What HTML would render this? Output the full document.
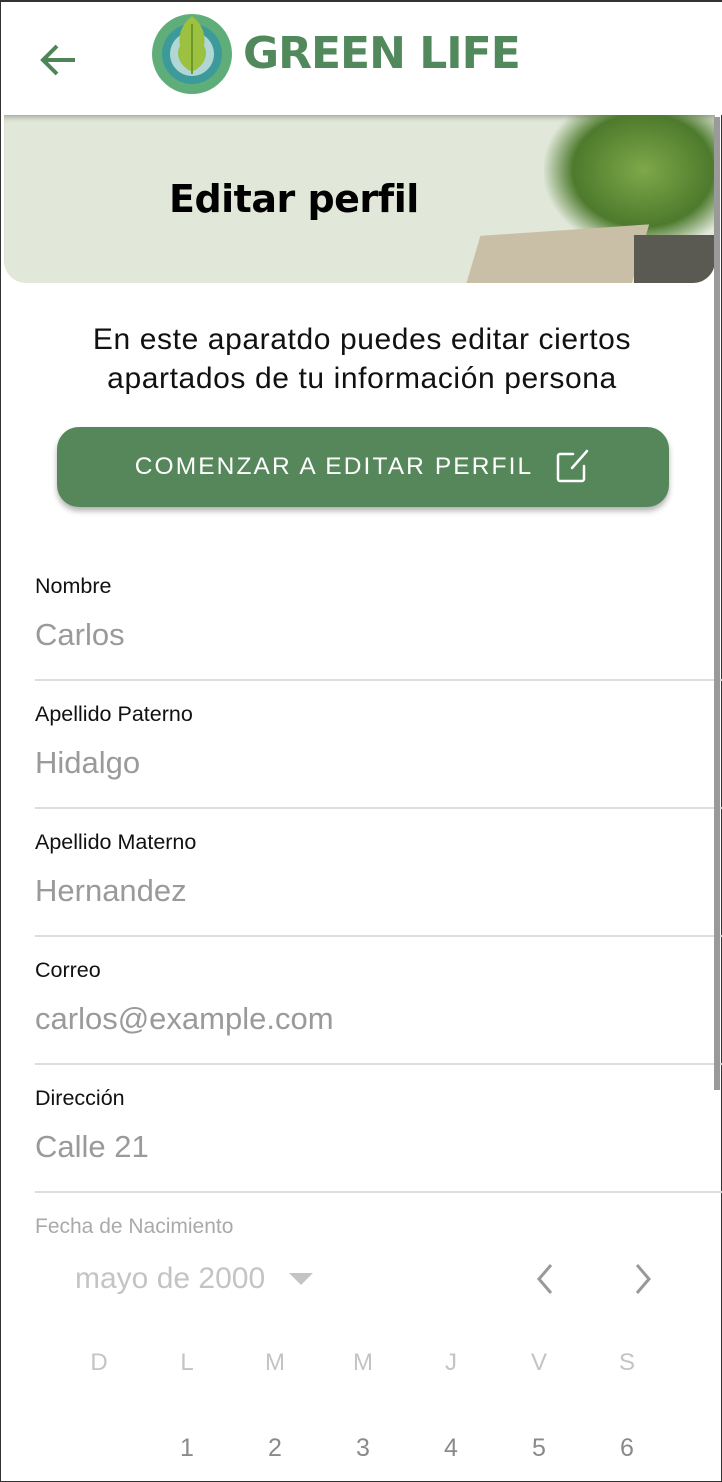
<!DOCTYPE html>
<html><head><meta charset="utf-8">
<style>
*{margin:0;padding:0;box-sizing:border-box}
body{width:722px;height:1482px;overflow:hidden;background:#fff;font-family:"Liberation Sans",sans-serif;position:relative;border:1px solid #333;border-top:2px solid #333}
.hdr{position:absolute;left:0;top:0;width:722px;height:113px;background:#fff}
.banner{position:absolute;left:3px;top:113px;width:711px;height:168px;background:#e1e8da;border-radius:0 0 22px 22px;overflow:hidden;box-shadow:inset 0 6px 6px -4px rgba(0,0,0,.3)}
.title{position:absolute;left:168px;top:175px;font:bold 38px "DejaVu Sans",sans-serif;color:#000;letter-spacing:-0.5px}
.intro{position:absolute;left:0;width:722px;top:318px;text-align:center;font-size:30px;line-height:39px;color:#111;letter-spacing:0.6px}
.btn{position:absolute;left:56px;top:425px;width:612px;height:80px;background:#56875b;border-radius:22px;box-shadow:0 4px 6px rgba(0,0,0,.3);color:#fff;font-size:24.5px;letter-spacing:2.1px;display:flex;align-items:center;justify-content:center}
.f{position:absolute;left:34px;width:688px;border-bottom:2px solid #ddd;height:128px}
.f .l{position:absolute;top:21px;font-size:21.5px;color:#111}
.f .v{position:absolute;top:64px;font-size:31px;color:#9a9a9a}
.sb{position:absolute;left:713px;top:115px;width:6px;height:973px;background:#9a9a9a}
.g{position:absolute;color:#c4c4c4;font-size:24px;width:40px;text-align:center}
.n{position:absolute;color:#8a8a8a;font-size:25px;width:40px;text-align:center;top:1432px}
</style></head><body>
<div class="hdr">
<svg style="position:absolute;left:38px;top:40px" width="40" height="36" viewBox="0 0 40 36"><path d="M36 18H4M18 4L4 18l14 14" fill="none" stroke="#4d8558" stroke-width="4"/></svg>
<svg style="position:absolute;left:146px;top:8px" width="90" height="88" viewBox="0 0 90 88">
<g fill="#5fae7a"><circle cx="45" cy="44" r="40"/></g>
<g fill="#3c9a9a"><circle cx="45" cy="44" r="30"/></g>
<g fill="#fff" opacity=".6"><circle cx="45" cy="44" r="22"/></g>
<path d="M45 6c10 8 14 18 12 30 4 6 2 16-6 22-4 4-8 4-12 0-8-6-10-16-6-22-2-12 2-22 12-30z" fill="#9cc040"/>
<path d="M45 14v50" stroke="#6f9a2b" stroke-width="2"/>
</svg>
<div style="position:absolute;left:242px;top:26px;font:bold 44px 'DejaVu Sans',sans-serif;color:#52895c;letter-spacing:-1px">GREEN LIFE</div>
</div>
<div class="banner">
<div style="position:absolute;left:540px;top:-10px;width:180px;height:145px;background:radial-gradient(ellipse at 55% 45%,#7fa84a 0%,#4d7a2c 50%,rgba(77,122,44,0) 72%)"></div>
<div style="position:absolute;left:468px;top:115px;width:165px;height:70px;background:#c9bfa6;transform:skewX(-20deg) rotate(-4deg)"></div>
<div style="position:absolute;left:630px;top:120px;width:85px;height:50px;background:#5a5a52"></div>
</div>
<div class="title">Editar perfil</div>
<div class="intro">En este aparatdo puedes editar ciertos<br>apartados de tu información persona</div>
<div class="btn">COMENZAR A EDITAR PERFIL
<svg style="margin-left:20px" width="38" height="38" viewBox="0 0 38 38"><path d="M20 6H7a2 2 0 0 0-2 2v23a2 2 0 0 0 2 2h22a2 2 0 0 0 2-2V18" fill="none" stroke="#fff" stroke-width="2.5" stroke-linecap="round"/><path d="M34 3L19 20" stroke="#fff" stroke-width="2.5" stroke-linecap="round"/></svg></div>
<div class="f" style="top:551px"><div class="l">Nombre</div><div class="v">Carlos</div></div>
<div class="f" style="top:679px"><div class="l">Apellido Paterno</div><div class="v">Hidalgo</div></div>
<div class="f" style="top:807px"><div class="l">Apellido Materno</div><div class="v">Hernandez</div></div>
<div class="f" style="top:935px"><div class="l">Correo</div><div class="v">carlos@example.com</div></div>
<div class="f" style="top:1063px"><div class="l">Dirección</div><div class="v">Calle 21</div></div>
<div class="sb"></div>
<div style="position:absolute;left:34px;top:1213px;font-size:21px;color:#aaa">Fecha de Nacimiento</div>
<div style="position:absolute;left:74px;top:1260px;font-size:30px;color:#c4c4c4">mayo de 2000</div>
<div style="position:absolute;left:288px;top:1271px;width:0;height:0;border-left:12px solid transparent;border-right:12px solid transparent;border-top:12px solid #c4c4c4"></div>
<svg style="position:absolute;left:534px;top:1260px" width="20" height="34"><path d="M16 3L4 17l12 14" fill="none" stroke="#999" stroke-width="3"/></svg>
<svg style="position:absolute;left:632px;top:1260px" width="20" height="34"><path d="M4 3l12 14L4 31" fill="none" stroke="#999" stroke-width="3"/></svg>
<div class="g" style="left:78px;top:1347px">D</div><div class="g" style="left:166px;top:1347px">L</div><div class="g" style="left:254px;top:1347px">M</div><div class="g" style="left:342px;top:1347px">M</div><div class="g" style="left:430px;top:1347px">J</div><div class="g" style="left:518px;top:1347px">V</div><div class="g" style="left:606px;top:1347px">S</div>
<div class="n" style="left:166px">1</div><div class="n" style="left:254px">2</div><div class="n" style="left:342px">3</div><div class="n" style="left:430px">4</div><div class="n" style="left:518px">5</div><div class="n" style="left:606px">6</div>
</body></html>
